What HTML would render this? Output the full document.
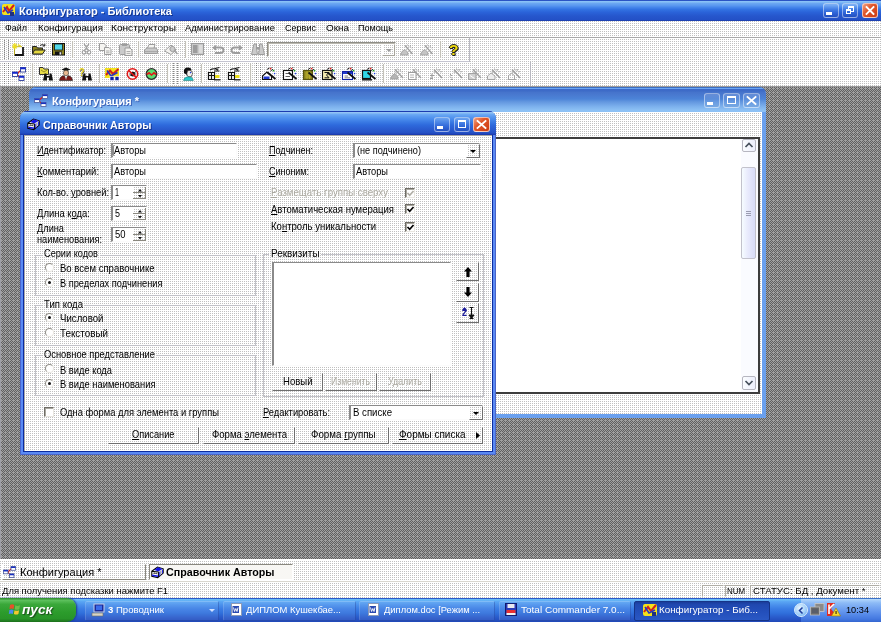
<!DOCTYPE html>
<html><head><meta charset="utf-8"><style>
*{box-sizing:border-box;margin:0;padding:0}
html,body{width:881px;height:622px;overflow:hidden;background:#808080;font-family:"Liberation Sans",sans-serif;font-size:10.7px;color:#000}
.abs{position:absolute}
#root{position:relative;width:881px;height:622px;overflow:hidden;background:#808080}
.t{position:absolute;white-space:nowrap;line-height:13px;transform-origin:0 50%;display:inline-block}
.face{background:conic-gradient(#fff 0 50%,#c0c0c0 50% 75%,#fff 75%) 0 0/2px 2px fixed #efeeef}
.w{color:#fff}
.dis{color:#aaa89f;text-shadow:1px 1px 0 #fff}
.inp{background:#fff;border-top:1px solid #8a8a8a;border-left:2px solid #8a8a8a;border-right:1px solid #fbfbfb;border-bottom:1px solid #fbfbfb}
.grp{border:1px solid #c2c2c8}
.btn{background:conic-gradient(#fff 0 50%,#c0c0c0 50% 75%,#fff 75%) 0 0/2px 2px fixed #efeeef;border-top:1px solid transparent;border-left:1px solid transparent;border-right:1px solid #6e6e6e;border-bottom:1px solid #6e6e6e;background-clip:padding-box,border-box}
.radio{border-radius:50%;background:#fff;border:1px solid #8f8d86;border-right-color:#e8e6e0;border-bottom-color:#e8e6e0}
.dot{border-radius:50%;background:#111}
.chk{background:#fff;border-top:1px solid #6f6d66;border-left:1px solid #6f6d66;border-right:1px solid #e8e6e0;border-bottom:1px solid #e8e6e0;box-shadow:inset 1px 1px 0 #a9a79f}
u{text-decoration:underline;text-underline-offset:1px}
svg{position:absolute;overflow:visible}
</style></head><body><div id="root">
<div class="abs " style="left:0px;top:0px;width:881px;height:21px;background:linear-gradient(#2a54c4 0,#2a54c4 1px,#8cc4f8 1px,#86bef6 2px,#6aa6f2 3.5px,#5a98f0 5.5px,#4484ea 7.5px,#3272e2 9.5px,#2a62d8 12.5px,#2656cc 16px,#2350c6 20px,#1c40b0 20px,#1c40b0 21px)"></div>
<span class="t w" style="left: 19px; top: 5px; font-size: 11.3px; font-weight: bold; text-shadow: rgb(18, 52, 140) 1px 1px 0px; transform: scaleX(0.9748);">Конфигуратор - Библиотека</span>
<div class="abs " style="left:2px;top:4px;width:13px;height:11px;background:#f4e21a;border-radius:2px"></div>
<svg style="left:2px;top:4px" width="13" height="12"><path d="M1 8 L5 3 L7 7 L12 1" stroke="#d02020" stroke-width="2" fill="none"></path><path d="M2 3 L6 9 L11 6" stroke="#2838c0" stroke-width="1.6" fill="none"></path><rect x="8" y="8" width="4" height="4" fill="#203080"></rect></svg>
<div class="abs " style="left:823px;top:3px;width:16px;height:15px;background:linear-gradient(rgba(255,255,255,.16),rgba(255,255,255,.02) 70%,rgba(0,0,40,.06));border:1px solid rgba(255,255,255,.45);border-radius:3px"></div>
<div class="abs " style="left:826px;top:12px;width:6px;height:3px;background:#fff"></div>
<div class="abs " style="left:842px;top:3px;width:16px;height:15px;background:linear-gradient(rgba(255,255,255,.16),rgba(255,255,255,.02) 70%,rgba(0,0,40,.06));border:1px solid rgba(255,255,255,.45);border-radius:3px"></div>
<div class="abs " style="left:848px;top:6px;width:6px;height:6px;border:1px solid #fff;border-top:2px solid #fff"></div>
<div class="abs " style="left:846px;top:9px;width:5px;height:5px;border:1px solid #fff;border-top:2px solid #fff;background:#2f68d8"></div>
<div class="abs " style="left:862px;top:3px;width:16px;height:15px;background:linear-gradient(135deg,#f0a080 0,#e0562a 40%,#cc3c12 100%);border:1px solid rgba(255,255,255,.65);border-radius:3px"></div>
<svg style="left:862px;top:3px" width="16" height="15"><path d="M4.5 4 L11.5 11 M11.5 4 L4.5 11" stroke="#fff" stroke-width="1.8" stroke-linecap="square"></path></svg>
<div class="abs face" style="left:0px;top:21px;width:881px;height:17px;"></div>
<span class="t " style="left: 5px; top: 21px; font-size: 9.6px; transform: scaleX(0.9325);">Файл</span>
<span class="t " style="left: 38px; top: 21px; font-size: 9.6px; transform: scaleX(1.0095);">Конфигурация</span>
<span class="t " style="left: 111px; top: 21px; font-size: 9.6px; transform: scaleX(1.055);">Конструкторы</span>
<span class="t " style="left: 185px; top: 21px; font-size: 9.6px; transform: scaleX(0.9838);">Администрирование</span>
<span class="t " style="left: 285px; top: 21px; font-size: 9.6px; transform: scaleX(0.9434);">Сервис</span>
<span class="t " style="left: 326px; top: 21px; font-size: 9.6px; transform: scaleX(1.0315);">Окна</span>
<span class="t " style="left: 358px; top: 21px; font-size: 9.6px; transform: scaleX(0.9444);">Помощь</span>
<div class="abs " style="left:0px;top:37px;width:881px;height:1px;background:#a8a8a8"></div>
<div class="abs face" style="left:0px;top:38px;width:881px;height:48px;"></div>
<div class="abs " style="left:0px;top:61px;width:470px;height:1px;background:#c4c4d0"></div>
<div class="abs " style="left:469px;top:38px;width:1px;height:24px;background:#b8b8c0"></div>
<div class="abs " style="left:530px;top:62px;width:1px;height:24px;background:#b8b8c0"></div>
<div class="abs" style="left:0;top:86px;width:881px;height:473px;overflow:hidden;background:#848484"><svg style="left:0;top:-2px" width="884" height="476" shape-rendering="crispEdges"><defs><pattern id="mdi" width="4" height="4" patternUnits="userSpaceOnUse"><rect width="4" height="4" fill="#a0a0a0"></rect><path d="M3 0h1v1h-1zM0 1h1v1h-1zM2 1h1v1h-1zM1 2h1v1h-1zM3 2h1v1h-1zM0 3h1v1h-1zM2 3h1v1h-1z" fill="#606060"></path></pattern></defs><rect width="884" height="476" fill="url(#mdi)"></rect></svg></div>
<div class="abs " style="left:0px;top:86px;width:881px;height:1px;background:#9a9a9a"></div>
<div class="abs " style="left:0px;top:87px;width:1px;height:472px;background:#a0a0a8"></div>
<div class="abs " style="left:4px;top:40px;width:1px;height:19px;background:repeating-linear-gradient(#858585 0 1px,transparent 1px 2px)"></div>
<div class="abs " style="left:8px;top:40px;width:1px;height:19px;background:repeating-linear-gradient(#858585 0 1px,transparent 1px 2px)"></div>
<svg style="left:12px;top:43px" width="13" height="13"><rect x="2.5" y="3.5" width="9" height="9" fill="#fff"></rect><path d="M11 4 V12 H2.5" stroke="#111" stroke-width="1.8" fill="none"></path><path d="M2.5 12 V5 M4 3.7 H10" stroke="#b8a820" stroke-width="1"></path><path d="M0 3.2 L5.6 3.2 M2.8 0 L2.8 6.6 M0.8 1 L4.8 5.4 M4.8 1 L0.8 5.4 M6 1.5 L9 3.5" stroke="#ecdc1c" stroke-width="1.1"></path></svg>
<svg style="left:32px;top:43px" width="14" height="12"><path d="M0.5 3.5 H4.5 L5.5 5 H10.5 V11 H0.5Z" fill="#8c8420" stroke="#222" stroke-width="1"></path><path d="M2.5 7 H13.2 L10.5 11 H0.5Z" fill="#e4d840" stroke="#222" stroke-width="1"></path><path d="M8 2.5 Q10.5 0.5 12.5 2.5 M12.8 0.8 V3 H10.6" stroke="#222" stroke-width="1" fill="none"></path></svg>
<svg style="left:52px;top:43px" width="13" height="13"><rect x="0.5" y="0.5" width="12" height="11.5" fill="#8c8420" stroke="#111" stroke-width="1"></rect><rect x="2.5" y="1" width="8" height="6" fill="#50d8e8" stroke="#111" stroke-width="0.8"></rect><rect x="3" y="8.5" width="7" height="3.5" fill="#111"></rect><rect x="7.5" y="9.2" width="1.8" height="2.4" fill="#e8e8e8"></rect></svg>
<div class="abs " style="left:72px;top:41px;width:1px;height:17px;background:#c4c2b9"></div>
<div class="abs " style="left:73px;top:41px;width:1px;height:17px;background:#fbfbf9"></div>
<svg style="left:82px;top:43px" width="9" height="12"><path d="M2 0.5 L6 7 M7 0.5 L3 7" stroke="#9c9c9c" stroke-width="1.2" fill="none"></path><circle cx="2" cy="9.3" r="1.8" fill="none" stroke="#9c9c9c" stroke-width="1.1"></circle><circle cx="7" cy="9.3" r="1.8" fill="none" stroke="#9c9c9c" stroke-width="1.1"></circle></svg>
<svg style="left:99px;top:43px" width="13" height="12"><path d="M0.5 0.5 H5 L7 2.5 V7.5 H0.5Z" fill="#f6f5f2" stroke="#9c9c9c" stroke-width="1"></path><path d="M5.5 4.5 H10 L12 6.5 V11.5 H5.5Z" fill="#f6f5f2" stroke="#9c9c9c" stroke-width="1"></path><path d="M7 8 H10.5 M7 9.8 H10.5" stroke="#9c9c9c" stroke-width="0.8"></path></svg>
<svg style="left:119px;top:43px" width="14" height="13"><rect x="0.5" y="1.5" width="10" height="10" rx="1" fill="#cacaca" stroke="#9c9c9c" stroke-width="1"></rect><rect x="3" y="0.3" width="5" height="2.6" fill="#9c9c9c"></rect><path d="M6 5 H11 L13 7 V12.5 H6Z" fill="#f4f3f0" stroke="#9c9c9c" stroke-width="1"></path><path d="M7.5 8.5 H11.5 M7.5 10.4 H11.5" stroke="#9c9c9c" stroke-width="0.8"></path></svg>
<div class="abs " style="left:138px;top:41px;width:1px;height:17px;background:#c4c2b9"></div>
<div class="abs " style="left:139px;top:41px;width:1px;height:17px;background:#fbfbf9"></div>
<svg style="left:144px;top:44px" width="14" height="11"><path d="M3.5 4 L5 0.5 H11 L10 4" fill="#f6f5f2" stroke="#9c9c9c" stroke-width="1"></path><path d="M0.5 6 L3 4 H12 L13.5 6 V9.5 H0.5Z" fill="#cacaca" stroke="#9c9c9c" stroke-width="1"></path><path d="M1 7.6 H13" stroke="#9c9c9c" stroke-width="0.8"></path></svg>
<svg style="left:164px;top:44px" width="14" height="11"><path d="M0.5 7 L7 1 L12 6 L7 10.5Z" fill="#f4f3f0" stroke="#9c9c9c" stroke-width="1"></path><circle cx="8.5" cy="5" r="2.6" fill="#cacaca" stroke="#9c9c9c" stroke-width="1"></circle><path d="M10.5 7 L13.5 10" stroke="#9c9c9c" stroke-width="1.4"></path></svg>
<div class="abs " style="left:185px;top:41px;width:1px;height:17px;background:#c4c2b9"></div>
<div class="abs " style="left:186px;top:41px;width:1px;height:17px;background:#fbfbf9"></div>
<svg style="left:191px;top:43px" width="13" height="12"><rect x="0.5" y="0.5" width="12" height="11" fill="#cacaca" stroke="#9c9c9c" stroke-width="1"></rect><rect x="2" y="2" width="4.5" height="8" fill="#9c9c9c"></rect><path d="M8 3 H11.5 M8 5 H11.5 M8 7 H11.5 M8 9 H11.5" stroke="#f4f4f2" stroke-width="0.9"></path></svg>
<svg style="left:212px;top:45px" width="12" height="9"><path d="M3.5 2.5 H8.5 Q11.5 2.5 11.5 5 Q11.5 8 8 8 H3" stroke="#9c9c9c" stroke-width="1.8" fill="none"></path><path d="M0 2.8 L4 0 V5.6Z" fill="#9c9c9c"></path></svg>
<svg style="left:231px;top:45px" width="12" height="9"><path d="M8.5 2.5 H3.5 Q0.5 2.5 0.5 5 Q0.5 8 4 8 H9" stroke="#9c9c9c" stroke-width="1.8" fill="none"></path><path d="M12 2.8 L8 0 V5.6Z" fill="#9c9c9c"></path></svg>
<svg style="left:251px;top:43px" width="14" height="13"><path d="M3 1 H5.5 V5 L6.5 11.5 H0.5 L2 5Z M8.5 1 H11 L12 5 L13.5 11.5 H7.5 L8.5 5Z" fill="#cacaca" stroke="#9c9c9c" stroke-width="1"></path><rect x="5.5" y="4" width="3" height="2.5" fill="#9c9c9c"></rect></svg>
<div class="abs face" style="left:267px;top:42px;width:129px;height:15px;border-top:1px solid #8f8d86;border-left:1px solid #8f8d86;border-right:1px solid #fdfdfc;border-bottom:1px solid #fdfdfc;box-shadow:inset 1px 1px 0 #b9b7ae"></div>
<div class="abs face" style="left:382px;top:44px;width:13px;height:12px;border:1px solid #fff;border-right-color:#a7a59c;border-bottom-color:#a7a59c"></div>
<svg style="left:385.5px;top:49px" width="6" height="3"><path d="M0 0 L3 3 L6 0Z" fill="#9c9c9c"></path></svg>
<svg style="left:400px;top:44px" width="13" height="12"><path d="M0.5 11 L2 7.5 L5 5.5 L7.5 8 L8 11Z" fill="#c4c4c4" stroke="#9c9c9c" stroke-width="0.8"></path><path d="M5 1.5 L12.5 10" stroke="#9c9c9c" stroke-width="1.3" fill="none"></path><path d="M7.5 0.5 L8.5 2.5 M10.5 1 L10 3.5 M11.5 4 L13 3.5" stroke="#9c9c9c" stroke-width="0.8" fill="none"></path></svg>
<svg style="left:420px;top:44px" width="13" height="12"><path d="M0.5 11 L2 7.5 L5 5.5 L7.5 8 L8 11Z" fill="#c4c4c4" stroke="#9c9c9c" stroke-width="0.8"></path><path d="M5 1.5 L12.5 10" stroke="#9c9c9c" stroke-width="1.3" fill="none"></path><path d="M7.5 0.5 L8.5 2.5 M10.5 1 L10 3.5 M11.5 4 L13 3.5" stroke="#9c9c9c" stroke-width="0.8" fill="none"></path></svg>
<div class="abs " style="left:440px;top:41px;width:1px;height:17px;background:#c4c2b9"></div>
<div class="abs " style="left:441px;top:41px;width:1px;height:17px;background:#fbfbf9"></div>
<span class="t " style="left: 449.3px; top: 44px; font-size: 14.5px; font-weight: bold; color: rgb(240, 220, 16); text-shadow: rgb(34, 34, 34) 1px 0px 0px, rgb(34, 34, 34) -1px 0px 0px, rgb(34, 34, 34) 0px 1px 0px, rgb(34, 34, 34) 0px -1px 0px, rgb(34, 34, 34) 1px 1px 0px; transform: scaleX(1.0723);">?</span>
<div class="abs " style="left:4px;top:63px;width:1px;height:21px;background:repeating-linear-gradient(#858585 0 1px,transparent 1px 2px)"></div>
<div class="abs " style="left:8px;top:63px;width:1px;height:21px;background:repeating-linear-gradient(#858585 0 1px,transparent 1px 2px)"></div>
<svg style="left:12px;top:67px" width="14" height="14"><path d="M5 7 L9.5 2.5 M5 7 L8 11" stroke="#d01818" stroke-width="1.2" fill="none"></path><rect x="8.5" y="0.5" width="5" height="4.5" fill="#fff" stroke="#2a3a9a" stroke-width="0.9"></rect><rect x="8.5" y="0.5" width="5" height="1.8" fill="#1428d0"></rect><rect x="0.5" y="5" width="5" height="4.5" fill="#fff" stroke="#2a3a9a" stroke-width="0.9"></rect><rect x="0.5" y="5" width="5" height="1.8" fill="#1428d0"></rect><rect x="7" y="9" width="5" height="4.5" fill="#fff" stroke="#2a3a9a" stroke-width="0.9"></rect><rect x="7" y="9" width="5" height="1.8" fill="#1428d0"></rect></svg>
<div class="abs " style="left:32px;top:64px;width:1px;height:19px;background:#c4c2b9"></div>
<div class="abs " style="left:33px;top:64px;width:1px;height:19px;background:#fbfbf9"></div>
<svg style="left:39px;top:67px" width="10" height="8"><path d="M0.5 0.5 H4 L5 2 H9.5 V7.5 H0.5Z" fill="#e8dc48" stroke="#333" stroke-width="1"></path><path d="M2 3 L5 5 L8 3" stroke="#8c8420" stroke-width="0.9" fill="none"></path></svg>
<svg style="left:43px;top:72.5px" width="10" height="8"><path d="M1.5 0.5 H3.5 V3 H6.5 V0.5 H8.5 L10 7.5 H6 V4.5 H4 V7.5 H0Z" fill="#111"></path></svg>
<svg style="left:59px;top:67px" width="13" height="14"><path d="M2.5 2.5 L7 0.5 L11.5 2.5 L7 4.5Z" fill="#111"></path><ellipse cx="7" cy="6" rx="2.6" ry="2.8" fill="#e8b890" stroke="#333" stroke-width="0.6"></ellipse><path d="M0.5 13.5 Q1 9 5 8.8 L7 11 L9 8.8 Q13 9 13.5 13.5Z" fill="#7a1818" stroke="#222" stroke-width="0.6"></path><path d="M6.2 9.5 L7 13 L7.8 9.5Z" fill="#fff"></path></svg>
<span class="t " style="left: 79px; top: 66px; font-size: 10.5px; font-weight: bold; color: rgb(232, 212, 24); text-shadow: rgb(85, 85, 85) 0.6px 0.6px 0px; transform: scaleX(0.8564);">?</span>
<svg style="left:82px;top:72.5px" width="10" height="8"><path d="M1.5 0.5 H3.5 V3 H6.5 V0.5 H8.5 L10 7.5 H6 V4.5 H4 V7.5 H0Z" fill="#111"></path></svg>
<div class="abs " style="left:99px;top:64px;width:1px;height:19px;background:#c4c2b9"></div>
<div class="abs " style="left:100px;top:64px;width:1px;height:19px;background:#fbfbf9"></div>
<div class="abs " style="left:105px;top:68px;width:14px;height:10px;background:#f4e21a"></div>
<svg style="left:105px;top:67px" width="14" height="14"><path d="M1 8 L5 3.5 L8 7 L13.5 2" stroke="#d02020" stroke-width="2" fill="none"></path><path d="M2 3.5 L6 9 L12.5 5.5" stroke="#2838c0" stroke-width="1.7" fill="none"></path><rect x="5" y="9.5" width="4" height="4" fill="#1020a0" stroke="#fff" stroke-width="0.6"></rect><rect x="10" y="9.5" width="4" height="4" fill="#1020a0" stroke="#fff" stroke-width="0.6"></rect></svg>
<svg style="left:126px;top:68px" width="13" height="12"><circle cx="6.5" cy="6" r="5.2" fill="#fff" stroke="#e01818" stroke-width="1.5"></circle><ellipse cx="6.8" cy="6" rx="2.2" ry="2.6" fill="#111"></ellipse><path d="M3.5 3.5 L10 8.5 M3.5 8 L10 3.5 M3.2 6 H10.2" stroke="#111" stroke-width="0.8"></path><path d="M2.8 2.6 L10.4 9.6" stroke="#e01818" stroke-width="1.6"></path></svg>
<svg style="left:145px;top:68px" width="13" height="12"><circle cx="6.5" cy="6" r="5.3" fill="#58e070" stroke="#2a2a2a" stroke-width="1.3"></circle><path d="M1.8 6.5 L4 4.8 L6.5 7 L9 4.8 L11.2 6.5" stroke="#e01818" stroke-width="1.6" fill="none"></path></svg>
<div class="abs " style="left:167px;top:64px;width:1px;height:19px;background:#c4c2b9"></div>
<div class="abs " style="left:168px;top:64px;width:1px;height:19px;background:#fbfbf9"></div>
<div class="abs " style="left:173px;top:63px;width:1px;height:21px;background:repeating-linear-gradient(#858585 0 1px,transparent 1px 2px)"></div>
<div class="abs " style="left:177px;top:63px;width:1px;height:21px;background:repeating-linear-gradient(#858585 0 1px,transparent 1px 2px)"></div>
<svg style="left:182px;top:67px" width="12" height="14"><path d="M2 6 Q1 0.5 6 0.5 Q9.5 0.5 9.5 3.5 L7 4.5 L5 8Z" fill="#111"></path><path d="M5.5 3.8 Q8.5 2.6 9.8 4.5 L10.8 7 L9.8 7.8 L9.5 9.6 H6 L4.8 7Z" fill="#f4f0ec" stroke="#222" stroke-width="0.6"></path><circle cx="8.6" cy="5.6" r="0.8" fill="#2040d0"></circle><path d="M1.5 13.5 Q2 10.5 5.5 9.8 L9 10.2 Q11 11 11.3 13.5Z" fill="#28c8c8" stroke="#0a6a6a" stroke-width="0.5"></path></svg>
<div class="abs " style="left:201px;top:64px;width:1px;height:19px;background:#c4c2b9"></div>
<div class="abs " style="left:202px;top:64px;width:1px;height:19px;background:#fbfbf9"></div>
<svg style="left:207px;top:67px" width="14" height="14"><path d="M1.5 5.5 H7.5 V12.5 H1.5Z M1.5 8.5 H7.5 M4.5 5.5 V12.5" fill="#fff" stroke="#111" stroke-width="1.2"></path><path d="M3 3 Q7 0.5 11 3 M8 1.5 L12.5 0.5 M7 4 H12.5" stroke="#111" stroke-width="1.1" fill="none"></path><rect x="8" y="8" width="4.5" height="3" fill="#e8dc20"></rect><path d="M7 12.8 H13.5" stroke="#111" stroke-width="1.2"></path></svg>
<svg style="left:227px;top:67px" width="14" height="14"><path d="M1.5 5.5 H7.5 V12.5 H1.5Z M1.5 8.5 H7.5 M4.5 5.5 V12.5" fill="#fff" stroke="#111" stroke-width="1.2"></path><path d="M3 3 Q7 0.5 11 3 M8 1.5 L12.5 0.5 M7 4 H12.5" stroke="#111" stroke-width="1.1" fill="none"></path><rect x="8" y="8" width="4.5" height="3" fill="#e8dc20"></rect><path d="M7 12.8 H13.5" stroke="#111" stroke-width="1.2"></path></svg>
<div class="abs " style="left:250px;top:64px;width:1px;height:19px;background:#c4c2b9"></div>
<div class="abs " style="left:251px;top:64px;width:1px;height:19px;background:#fbfbf9"></div>
<div class="abs " style="left:256px;top:63px;width:1px;height:21px;background:repeating-linear-gradient(#858585 0 1px,transparent 1px 2px)"></div>
<div class="abs " style="left:260px;top:63px;width:1px;height:21px;background:repeating-linear-gradient(#858585 0 1px,transparent 1px 2px)"></div>
<svg style="left:262px;top:67px" width="15" height="14"><path d="M0.5 9 L5 5 L9.5 9 V12.5 H0.5Z" fill="#fff" stroke="#111" stroke-width="1.1"></path><rect x="1.5" y="9.5" width="6" height="2.5" fill="#2038d0"></rect><path d="M5.5 5.5 L13.5 12" stroke="#111" stroke-width="1.8"></path><path d="M5 2.5 L7.5 0.8 M8.5 4 L11 2.2 M9.5 1 L10.2 0.2" stroke="#111" stroke-width="0.9"></path><circle cx="8.6" cy="1.6" r="0.9" fill="#e02020"></circle><circle cx="11.6" cy="3.6" r="0.9" fill="#20a020"></circle><circle cx="12.6" cy="6.6" r="0.8" fill="#2040e0"></circle></svg>
<svg style="left:283px;top:67px" width="15" height="14"><rect x="0.5" y="3.5" width="9" height="9" fill="#fff" stroke="#111" stroke-width="1.1"></rect><path d="M2.5 6.5 H5.5 M2.5 9.5 H7" stroke="#333" stroke-width="0.8"></path><path d="M5.5 5.5 L13.5 12" stroke="#111" stroke-width="1.8"></path><path d="M5 2.5 L7.5 0.8 M8.5 4 L11 2.2 M9.5 1 L10.2 0.2" stroke="#111" stroke-width="0.9"></path><circle cx="8.6" cy="1.6" r="0.9" fill="#e02020"></circle><circle cx="11.6" cy="3.6" r="0.9" fill="#20a020"></circle><circle cx="12.6" cy="6.6" r="0.8" fill="#2040e0"></circle></svg>
<svg style="left:303px;top:67px" width="15" height="14"><rect x="0.5" y="3.5" width="9" height="9" fill="#8c8420" stroke="#5a5410" stroke-width="1.1"></rect><path d="M2 6 H8 M2 8 H8 M2 10 H8 M4 4 V12 M6.5 4 V12" stroke="#c4b830" stroke-width="0.7"></path><path d="M5.5 5.5 L13.5 12" stroke="#111" stroke-width="1.8"></path><path d="M5 2.5 L7.5 0.8 M8.5 4 L11 2.2 M9.5 1 L10.2 0.2" stroke="#111" stroke-width="0.9"></path><circle cx="8.6" cy="1.6" r="0.9" fill="#e02020"></circle><circle cx="11.6" cy="3.6" r="0.9" fill="#20a020"></circle><circle cx="12.6" cy="6.6" r="0.8" fill="#2040e0"></circle></svg>
<svg style="left:322px;top:67px" width="15" height="14"><rect x="0.5" y="3.5" width="9.5" height="9" fill="#f4ecb0" stroke="#111" stroke-width="1.1"></rect><path d="M2.5 5.5 H7 L4.5 8 L7 10.8 H2.5" stroke="#111" stroke-width="1" fill="none"></path><path d="M5.5 5.5 L13.5 12" stroke="#111" stroke-width="1.8"></path><path d="M5 2.5 L7.5 0.8 M8.5 4 L11 2.2 M9.5 1 L10.2 0.2" stroke="#111" stroke-width="0.9"></path><circle cx="8.6" cy="1.6" r="0.9" fill="#e02020"></circle><circle cx="11.6" cy="3.6" r="0.9" fill="#20a020"></circle><circle cx="12.6" cy="6.6" r="0.8" fill="#2040e0"></circle></svg>
<svg style="left:342px;top:67px" width="15" height="14"><rect x="0.5" y="4.5" width="10" height="8" fill="#fff" stroke="#1020a0" stroke-width="1.1"></rect><rect x="1" y="5" width="9" height="2" fill="#2038d0"></rect><path d="M2.5 9 H6 M2.5 10.8 H8" stroke="#666" stroke-width="0.8"></path><path d="M5.5 5.5 L13.5 12" stroke="#111" stroke-width="1.8"></path><path d="M5 2.5 L7.5 0.8 M8.5 4 L11 2.2 M9.5 1 L10.2 0.2" stroke="#111" stroke-width="0.9"></path><circle cx="8.6" cy="1.6" r="0.9" fill="#e02020"></circle><circle cx="11.6" cy="3.6" r="0.9" fill="#20a020"></circle><circle cx="12.6" cy="6.6" r="0.8" fill="#2040e0"></circle></svg>
<svg style="left:362px;top:67px" width="15" height="14"><rect x="0.5" y="3.5" width="8" height="8" fill="#30d8e8" stroke="#111" stroke-width="1.2"></rect><path d="M0 12.8 H10" stroke="#111" stroke-width="1.4"></path><path d="M5.5 5.5 L13.5 12" stroke="#111" stroke-width="1.8"></path><path d="M5 2.5 L7.5 0.8 M8.5 4 L11 2.2 M9.5 1 L10.2 0.2" stroke="#111" stroke-width="0.9"></path><circle cx="8.6" cy="1.6" r="0.9" fill="#e02020"></circle><circle cx="11.6" cy="3.6" r="0.9" fill="#20a020"></circle><circle cx="12.6" cy="6.6" r="0.8" fill="#2040e0"></circle></svg>
<div class="abs " style="left:383px;top:64px;width:1px;height:19px;background:#c4c2b9"></div>
<div class="abs " style="left:384px;top:64px;width:1px;height:19px;background:#fbfbf9"></div>
<svg style="left:390px;top:68px" width="14" height="12"><path d="M0.5 11 L2 7.5 L5 5.5 L7.5 8 L8 11Z" fill="#b4b4b4" stroke="#9c9c9c" stroke-width="0.8"></path><path d="M5 1.5 L13 10" stroke="#9c9c9c" stroke-width="1.3" fill="none"></path><path d="M7.5 0.5 L8.5 2.5 M10.5 1 L10 3.5 M11.5 4 L13 3.5 M4.5 4 L6.5 4.5" stroke="#9c9c9c" stroke-width="0.8" fill="none"></path></svg>
<svg style="left:408px;top:68px" width="14" height="12"><rect x="0.5" y="4.5" width="7.5" height="7" fill="#fff" stroke="#9c9c9c" stroke-width="1"></rect><path d="M2 7 H6 M2 9.3 H6" stroke="#9c9c9c" stroke-width="0.8"></path><path d="M5 1.5 L13 10" stroke="#9c9c9c" stroke-width="1.3" fill="none"></path><path d="M7.5 0.5 L8.5 2.5 M10.5 1 L10 3.5 M11.5 4 L13 3.5 M4.5 4 L6.5 4.5" stroke="#9c9c9c" stroke-width="0.8" fill="none"></path></svg>
<svg style="left:429px;top:68px" width="14" height="12"><path d="M1 7.5 H5 M3 5.5 V10.5 M1 10.5 H4" stroke="#9c9c9c" stroke-width="1.1" fill="none"></path><path d="M5 1.5 L13 10" stroke="#9c9c9c" stroke-width="1.3" fill="none"></path><path d="M7.5 0.5 L8.5 2.5 M10.5 1 L10 3.5 M11.5 4 L13 3.5 M4.5 4 L6.5 4.5" stroke="#9c9c9c" stroke-width="0.8" fill="none"></path></svg>
<svg style="left:449px;top:68px" width="14" height="12"><path d="M1 6 L3 8 M1 8.5 L3 10.5 M2 11.5 H4" stroke="#9c9c9c" stroke-width="1" fill="none"></path><path d="M5 1.5 L13 10" stroke="#9c9c9c" stroke-width="1.3" fill="none"></path><path d="M7.5 0.5 L8.5 2.5 M10.5 1 L10 3.5 M11.5 4 L13 3.5 M4.5 4 L6.5 4.5" stroke="#9c9c9c" stroke-width="0.8" fill="none"></path></svg>
<svg style="left:468px;top:68px" width="14" height="12"><path d="M0.5 5.5 H8 V11.5 H0.5Z" fill="#d0d0d0" stroke="#9c9c9c" stroke-width="0.9"></path><path d="M2 7.5 L6.5 10.5" stroke="#fff" stroke-width="1"></path><path d="M5 1.5 L13 10" stroke="#9c9c9c" stroke-width="1.3" fill="none"></path><path d="M7.5 0.5 L8.5 2.5 M10.5 1 L10 3.5 M11.5 4 L13 3.5 M4.5 4 L6.5 4.5" stroke="#9c9c9c" stroke-width="0.8" fill="none"></path></svg>
<svg style="left:487px;top:68px" width="14" height="12"><path d="M0.5 8 L4 5 L8 8 V11.5 H0.5Z" fill="#ececec" stroke="#9c9c9c" stroke-width="0.9"></path><path d="M5 1.5 L13 10" stroke="#9c9c9c" stroke-width="1.3" fill="none"></path><path d="M7.5 0.5 L8.5 2.5 M10.5 1 L10 3.5 M11.5 4 L13 3.5 M4.5 4 L6.5 4.5" stroke="#9c9c9c" stroke-width="0.8" fill="none"></path></svg>
<svg style="left:507px;top:68px" width="14" height="12"><path d="M0.5 11.5 H9 M1.5 11 V7.5 L4.5 5.5 L7.5 7.5 V11" fill="none" stroke="#9c9c9c" stroke-width="0.9"></path><path d="M5 1.5 L13 10" stroke="#9c9c9c" stroke-width="1.3" fill="none"></path><path d="M7.5 0.5 L8.5 2.5 M10.5 1 L10 3.5 M11.5 4 L13 3.5 M4.5 4 L6.5 4.5" stroke="#9c9c9c" stroke-width="0.8" fill="none"></path></svg>
<div class="abs " style="left:29px;top:87px;width:737px;height:331px;background:#6aa0ee;border-radius:7px 7px 0 0"></div>
<div class="abs " style="left:29px;top:87px;width:737px;height:25px;border-radius:7px 7px 0 0;background:linear-gradient(#3a6ec4 0,#3a6ec4 1px,#6aa4f4 1px,#6aa4f4 2px,#3c68c8 2px,#3e6cc8 4px,#4674cc 5.5px,#4a7cd2 9px,#4c84d8 12px,#6498e0 15px,#7aaeec 19px,#8cc0f4 23px,#8cc0f4 25px)"></div>
<div class="abs face" style="left:33px;top:112px;width:729px;height:302px;"></div>
<svg style="left:34px;top:94px" width="14" height="13"><path d="M5 6.5 L9 2.5 M5 6.5 L8 10.5" stroke="#d02020" stroke-width="1.2"></path><rect x="8.5" y="0.5" width="5" height="4" fill="#fff" stroke="#4a5a9a" stroke-width="0.8"></rect><rect x="8.5" y="0.5" width="5" height="1.6" fill="#1830c0"></rect><rect x="0.5" y="4.5" width="5" height="4" fill="#fff" stroke="#4a5a9a" stroke-width="0.8"></rect><rect x="0.5" y="4.5" width="5" height="1.6" fill="#1830c0"></rect><rect x="7" y="8.5" width="5" height="4" fill="#fff" stroke="#4a5a9a" stroke-width="0.8"></rect><rect x="7" y="8.5" width="5" height="1.6" fill="#1830c0"></rect></svg>
<span class="t w" style="left: 51.5px; top: 95px; font-size: 11.3px; font-weight: bold; text-shadow: rgb(58, 98, 184) 1px 1px 0px; transform: scaleX(0.9721);">Конфигурация *</span>
<div class="abs " style="left:704px;top:93px;width:16px;height:15px;background:linear-gradient(rgba(255,255,255,.16),rgba(255,255,255,.02) 70%,rgba(0,0,40,.06));border:1px solid rgba(255,255,255,.45);border-radius:3px"></div>
<div class="abs " style="left:707px;top:102px;width:6px;height:3px;background:#fff"></div>
<div class="abs " style="left:723px;top:93px;width:17px;height:15px;background:linear-gradient(rgba(255,255,255,.16),rgba(255,255,255,.02) 70%,rgba(0,0,40,.06));border:1px solid rgba(255,255,255,.45);border-radius:3px"></div>
<div class="abs " style="left:727px;top:96px;width:9px;height:8px;border:1px solid #fff;border-top:2px solid #fff"></div>
<div class="abs " style="left:743px;top:93px;width:17px;height:15px;background:linear-gradient(rgba(255,255,255,.16),rgba(255,255,255,.02) 70%,rgba(0,0,40,.06));border:1px solid rgba(255,255,255,.45);border-radius:3px"></div>
<svg style="left:743px;top:93px" width="17" height="15"><path d="M4.5 4 L12.5 11 M12.5 4 L4.5 11" stroke="#fff" stroke-width="1.8" stroke-linecap="square"></path></svg>
<div class="abs " style="left:33px;top:137px;width:727px;height:257px;background:#fff;border:2px solid #3c3c3c;border-top-color:#3c3c3c"></div>
<div class="abs " style="left:741px;top:139px;width:17px;height:253px;background:#fafbff"></div>
<div class="abs " style="left:742px;top:139px;width:14px;height:13px;background:linear-gradient(90deg,#fbfdff,#eceefc);border:1px solid #b6b6c0;border-radius:2px"></div>
<svg style="left:742px;top:139px" width="14" height="13"><path d="M3.5 8 L7 4.5 L10.5 8" stroke="#46505c" stroke-width="1.7" fill="none"></path></svg>
<div class="abs " style="left:742px;top:376px;width:14px;height:14px;background:linear-gradient(90deg,#fbfdff,#eceefc);border:1px solid #b6b6c0;border-radius:2px"></div>
<svg style="left:742px;top:376px" width="14" height="14"><path d="M3.5 5 L7 8.5 L10.5 5" stroke="#46505c" stroke-width="1.7" fill="none"></path></svg>
<div class="abs " style="left:741px;top:167px;width:15px;height:92px;background:linear-gradient(90deg,#f6fcff,#e8eafc 45%,#d8dcf8);border:1px solid #c2c2cc;border-radius:2px"></div>
<div class="abs " style="left:746px;top:211px;width:5px;height:1px;background:#9a9cb0"></div>
<div class="abs " style="left:746px;top:213px;width:5px;height:1px;background:#9a9cb0"></div>
<div class="abs " style="left:746px;top:215px;width:5px;height:1px;background:#9a9cb0"></div>
<div class="abs " style="left:20px;top:111px;width:476px;height:344px;background:#5a8af4;border:1px solid #4a64c8;border-radius:7px 7px 0 0"></div>
<div class="abs " style="left:23px;top:134px;width:470px;height:318px;background:#0a2ca0"></div>
<div class="abs " style="left:20px;top:111px;width:476px;height:24px;border-radius:7px 7px 0 0;background:linear-gradient(#1c3cb0 0,#1c3cb0 1px,#9ac8f4 1px,#8abef4 2px,#6aa8f4 3.5px,#5a9af0 5.5px,#4a8cec 8px,#3a7ae4 11px,#2e6adc 14px,#2a5cd0 18px,#2450c4 22px,#1c3cb0 23.5px,#1c3cb0 24px)"></div>
<div class="abs " style="left:24px;top:135px;width:468px;height:1px;background:#a8a8a8"></div>
<div class="abs face" style="left:24px;top:136px;width:468px;height:315px;"></div>
<div class="abs " style="left:24px;top:136px;width:1px;height:315px;background:#a8a8a8"></div>
<div class="abs " style="left:25px;top:136px;width:1px;height:315px;background:#fff"></div>
<svg style="left:27px;top:118px" width="13" height="12"><path d="M0.8 5.2 L6.5 1 L12.2 2.8 L12.2 7 L6.8 11.6 L0.8 10.2Z" fill="#fff" stroke="#000" stroke-width="1.1"></path><path d="M3.2 4 L7 1.3 L11.6 2.9 L7.6 5.6Z" fill="#1414e6"></path><path d="M7.6 6.2 L12 3.4 L12 6.8 L7.6 10.8Z" fill="#1414e6"></path><path d="M9.2 4.6 L9.2 9.2 M10.6 3.9 L10.6 8" stroke="#f4f0c0" stroke-width="0.9"></path><path d="M1 5.4 L7.4 5.9 L7.4 11" stroke="#000" stroke-width="1" fill="none"></path><path d="M1.2 8.6 L7 9.6 L7 11 L1.2 9.9Z" fill="#1414e6"></path><path d="M2.8 7.8 V6.9 H3.8 V7.9 M4.8 8 V7.1 H5.8 V8.2" stroke="#000" stroke-width="0.7" fill="none"></path></svg>
<span class="t w" style="left: 43px; top: 119px; font-size: 11.3px; font-weight: bold; text-shadow: rgb(18, 52, 140) 1px 1px 0px; transform: scaleX(0.9476);">Справочник Авторы</span>
<div class="abs " style="left:434px;top:117px;width:16px;height:15px;background:linear-gradient(rgba(255,255,255,.16),rgba(255,255,255,.02) 70%,rgba(0,0,40,.06));border:1px solid rgba(255,255,255,.45);border-radius:3px"></div>
<div class="abs " style="left:437px;top:126px;width:6px;height:3px;background:#fff"></div>
<div class="abs " style="left:454px;top:117px;width:16px;height:15px;background:linear-gradient(rgba(255,255,255,.16),rgba(255,255,255,.02) 70%,rgba(0,0,40,.06));border:1px solid rgba(255,255,255,.45);border-radius:3px"></div>
<div class="abs " style="left:458px;top:120px;width:8px;height:8px;border:1px solid #fff;border-top:2px solid #fff"></div>
<div class="abs " style="left:473px;top:117px;width:17px;height:15px;background:linear-gradient(135deg,#f0a080 0,#e0562a 40%,#cc3c12 100%);border:1px solid rgba(255,255,255,.65);border-radius:3px"></div>
<svg style="left:473px;top:117px" width="17" height="15"><path d="M4.5 4 L12.5 11 M12.5 4 L4.5 11" stroke="#fff" stroke-width="1.8" stroke-linecap="square"></path></svg>
<span class="t " style="left: 36.5px; top: 144px; font-size: 10.7px; transform: scaleX(0.845);"><u>И</u>дентификатор:</span>
<div class="abs inp" style="left:111px;top:143px;width:126px;height:15px;"></div>
<span class="t " style="left: 113.7px; top: 144px; font-size: 10.7px; transform: scaleX(0.8667);">Авторы</span>
<div class="abs " style="left:113px;top:145px;width:1px;height:11px;background:#8c8c8c"></div>
<div class="abs " style="left:112px;top:145px;width:3px;height:1px;background:#a8a8a8"></div>
<div class="abs " style="left:112px;top:155px;width:3px;height:1px;background:#a8a8a8"></div>
<span class="t " style="left: 36.5px; top: 165px; font-size: 10.7px; transform: scaleX(0.882);"><u>К</u>омментарий:</span>
<div class="abs inp" style="left:111px;top:164px;width:146px;height:15px;"></div>
<span class="t " style="left: 113.7px; top: 165px; font-size: 10.7px; transform: scaleX(0.8667);">Авторы</span>
<span class="t " style="left: 36.5px; top: 186px; font-size: 10.7px; transform: scaleX(0.8699);">Кол-во. <u>у</u>ровней:</span>
<div class="abs inp" style="left:111px;top:185px;width:36px;height:15px;"></div>
<span class="t " style="left: 114.5px; top: 186px; font-size: 10.7px; transform: scaleX(0.6719);">1</span>
<div class="abs face" style="left:133px;top:187px;width:13px;height:6px;border-bottom:1px solid #8a887f;border-right:1px solid #8a887f"></div>
<div class="abs face" style="left:133px;top:193px;width:13px;height:6px;border-bottom:1px solid #8a887f;border-right:1px solid #8a887f"></div>
<svg style="left:138px;top:188.5px" width="4" height="2.5"><path d="M0 2.5 L2 0 L4 2.5Z" fill="#111"></path></svg>
<svg style="left:138px;top:195.0px" width="4" height="2.5"><path d="M0 0 L2 2.5 L4 0Z" fill="#111"></path></svg>
<span class="t " style="left: 36.5px; top: 207px; font-size: 10.7px; transform: scaleX(0.8843);">Длина к<u>о</u>да:</span>
<div class="abs inp" style="left:111px;top:206px;width:36px;height:15px;"></div>
<span class="t " style="left: 114.5px; top: 207px; font-size: 10.7px; transform: scaleX(0.8399);">5</span>
<div class="abs face" style="left:133px;top:208px;width:13px;height:6px;border-bottom:1px solid #8a887f;border-right:1px solid #8a887f"></div>
<div class="abs face" style="left:133px;top:214px;width:13px;height:6px;border-bottom:1px solid #8a887f;border-right:1px solid #8a887f"></div>
<svg style="left:138px;top:209.5px" width="4" height="2.5"><path d="M0 2.5 L2 0 L4 2.5Z" fill="#111"></path></svg>
<svg style="left:138px;top:216.0px" width="4" height="2.5"><path d="M0 0 L2 2.5 L4 0Z" fill="#111"></path></svg>
<span class="t " style="left: 36.5px; top: 222px; font-size: 10.7px; transform: scaleX(0.8623);"><u>Д</u>лина</span>
<span class="t " style="left: 36.5px; top: 233px; font-size: 10.7px; transform: scaleX(0.8656);">наименования:</span>
<div class="abs inp" style="left:111px;top:227px;width:36px;height:15px;"></div>
<span class="t " style="left: 114.5px; top: 228px; font-size: 10.7px; transform: scaleX(0.883);">50</span>
<div class="abs face" style="left:133px;top:229px;width:13px;height:6px;border-bottom:1px solid #8a887f;border-right:1px solid #8a887f"></div>
<div class="abs face" style="left:133px;top:235px;width:13px;height:6px;border-bottom:1px solid #8a887f;border-right:1px solid #8a887f"></div>
<svg style="left:138px;top:230.5px" width="4" height="2.5"><path d="M0 2.5 L2 0 L4 2.5Z" fill="#111"></path></svg>
<svg style="left:138px;top:237.0px" width="4" height="2.5"><path d="M0 0 L2 2.5 L4 0Z" fill="#111"></path></svg>
<span class="t " style="left: 269px; top: 144px; font-size: 10.7px; transform: scaleX(0.8479);"><u>П</u>одчинен:</span>
<div class="abs inp" style="left:353px;top:143px;width:127px;height:15px;"></div>
<span class="t " style="left: 357px; top: 144px; font-size: 10.7px; transform: scaleX(0.8544);">(не подчинено)</span>
<div class="abs btn" style="left:466px;top:144px;width:14px;height:14px;"></div>
<svg style="left:469.5px;top:150.0px" width="6" height="3"><path d="M0 0 L3 3 L6 0Z" fill="#000"></path></svg>
<span class="t " style="left: 269px; top: 165px; font-size: 10.7px; transform: scaleX(0.838);"><u>С</u>иноним:</span>
<div class="abs inp" style="left:353px;top:164px;width:128px;height:15px;"></div>
<span class="t " style="left: 355.7px; top: 165px; font-size: 10.7px; transform: scaleX(0.8667);">Авторы</span>
<span class="t dis" style="left: 270.5px; top: 186px; font-size: 10.7px; transform: scaleX(0.9042);"><u>Р</u>азмещать группы сверху</span>
<div class="abs chk" style="left:405px;top:188px;width:10px;height:10px;"></div>
<svg style="left:407px;top:190px" width="7" height="7"><path d="M0.5 3 L2.7 5.3 L6.5 1" stroke="#b0aea6" stroke-width="1.7" fill="none"></path></svg>
<span class="t " style="left: 270.5px; top: 203px; font-size: 10.7px; transform: scaleX(0.8921);"><u>А</u>втоматическая нумерация</span>
<div class="abs chk" style="left:405px;top:204px;width:10px;height:10px;"></div>
<svg style="left:407px;top:206.3px" width="7" height="7"><path d="M0.5 3 L2.7 5.3 L6.5 1" stroke="#000" stroke-width="1.7" fill="none"></path></svg>
<span class="t " style="left: 270.5px; top: 220px; font-size: 10.7px; transform: scaleX(0.8948);">Ко<u>н</u>троль уникальности</span>
<div class="abs chk" style="left:405px;top:222px;width:10px;height:10px;"></div>
<svg style="left:407px;top:223.5px" width="7" height="7"><path d="M0.5 3 L2.7 5.3 L6.5 1" stroke="#000" stroke-width="1.7" fill="none"></path></svg>
<div class="abs grp" style="left:35px;top:255px;width:221px;height:41px;"></div>
<div class="abs face" style="left:42px;top:252px;width:58px;height:8px;"></div>
<span class="t " style="left: 44px; top: 247px; font-size: 10.7px; transform: scaleX(0.8586);">Серии кодов</span>
<div class="abs radio" style="left:45px;top:263px;width:9px;height:9px;"></div>
<span class="t " style="left: 60px; top: 262px; font-size: 10.7px; transform: scaleX(0.8943);">Во всем справочнике</span>
<div class="abs radio" style="left:45px;top:278px;width:9px;height:9px;"></div>
<div class="abs dot" style="left:48.0px;top:280.5px;width:3.0px;height:3.0px;"></div>
<span class="t " style="left: 60px; top: 277px; font-size: 10.7px; transform: scaleX(0.864);">В пределах подчинения</span>
<div class="abs grp" style="left:35px;top:305px;width:221px;height:41px;"></div>
<div class="abs face" style="left:42px;top:302px;width:43px;height:8px;"></div>
<span class="t " style="left: 44px; top: 298px; font-size: 10.7px; transform: scaleX(0.8969);">Тип кода</span>
<div class="abs radio" style="left:45px;top:313px;width:9px;height:9px;"></div>
<div class="abs dot" style="left:48.0px;top:316.0px;width:3.0px;height:3.0px;"></div>
<span class="t " style="left: 60px; top: 312px; font-size: 10.7px; transform: scaleX(0.9021);">Числовой</span>
<div class="abs radio" style="left:45px;top:328px;width:9px;height:9px;"></div>
<span class="t " style="left: 60px; top: 327px; font-size: 10.7px; transform: scaleX(0.922);">Текстовый</span>
<div class="abs grp" style="left:35px;top:355px;width:221px;height:41px;"></div>
<div class="abs face" style="left:42px;top:352px;width:115px;height:8px;"></div>
<span class="t " style="left: 44px; top: 348px; font-size: 10.7px; transform: scaleX(0.8733);">Основное представление</span>
<div class="abs radio" style="left:45px;top:364px;width:9px;height:9px;"></div>
<span class="t " style="left: 60px; top: 364px; font-size: 10.7px; transform: scaleX(0.8726);">В виде кода</span>
<div class="abs radio" style="left:45px;top:379px;width:9px;height:9px;"></div>
<div class="abs dot" style="left:48.0px;top:381.8px;width:3.0px;height:3.0px;"></div>
<span class="t " style="left: 60px; top: 378px; font-size: 10.7px; transform: scaleX(0.876);">В виде наименования</span>
<div class="abs chk" style="left:44px;top:407px;width:10px;height:10px;"></div>
<span class="t " style="left: 60px; top: 406px; font-size: 10.7px; transform: scaleX(0.8791);">О<u>д</u>на форма для элемента и группы</span>
<div class="abs grp" style="left:263px;top:254px;width:221px;height:143px;"></div>
<div class="abs face" style="left:269px;top:251px;width:52px;height:8px;"></div>
<span class="t " style="left: 270.5px; top: 247px; font-size: 10.7px; transform: scaleX(0.926);">Реквизиты</span>
<div class="abs inp" style="left:272px;top:262px;width:179px;height:104px;"></div>
<div class="abs btn" style="left:456px;top:262px;width:23px;height:19px;"></div>
<svg style="left:463.5px;top:266.5px" width="8" height="10"><path d="M4 0 L8 4.5 L5.6 4.5 L5.6 10 L2.4 10 L2.4 4.5 L0 4.5Z" fill="#000"></path></svg>
<div class="abs btn" style="left:456px;top:283px;width:23px;height:19px;"></div>
<svg style="left:463.5px;top:286.5px" width="8" height="10"><path d="M4 10 L8 5.5 L5.6 5.5 L5.6 0 L2.4 0 L2.4 5.5 L0 5.5Z" fill="#000"></path></svg>
<div class="abs btn" style="left:456px;top:303px;width:23px;height:20px;"></div>
<span class="t " style="left: 461.5px; top: 306px; font-size: 10px; font-weight: bold; color: rgb(26, 26, 154); transform: scaleX(0.8989);">2</span>
<svg style="left:461.5px;top:307px" width="5" height="4"><path d="M0 4 L2.5 0 L5 4Z" fill="#1a1a9a"></path></svg>
<svg style="left:468.5px;top:307px" width="5" height="12"><path d="M0.5 0.5 H4.5 M2.5 0.5 V9 M0 8 L2.5 11.5 L5 8Z M0.5 11.5 H4.5" stroke="#111" stroke-width="1" fill="#111"></path></svg>
<div class="abs btn" style="left:272px;top:373px;width:51px;height:18px;"></div>
<span class="t " style="left: 282.8px; top: 375px; font-size: 10.7px; transform: scaleX(0.8939);">Новый</span>
<div class="abs btn" style="left:325px;top:373px;width:52px;height:18px;"></div>
<span class="t dis" style="left: 331px; top: 375px; font-size: 10.7px; transform: scaleX(0.8088);">Изменить</span>
<div class="abs btn" style="left:379px;top:373px;width:52px;height:18px;"></div>
<span class="t dis" style="left: 387.5px; top: 375px; font-size: 10.7px; transform: scaleX(0.8331);">Удалить</span>
<span class="t " style="left: 263px; top: 406px; font-size: 10.7px; transform: scaleX(0.8723);"><u>Р</u>едактировать:</span>
<div class="abs inp" style="left:349px;top:405px;width:134px;height:15px;"></div>
<span class="t " style="left: 352.5px; top: 406px; font-size: 10.7px; transform: scaleX(0.9008);">В списке</span>
<div class="abs btn" style="left:469px;top:406px;width:14px;height:14px;"></div>
<svg style="left:472.5px;top:412.0px" width="6" height="3"><path d="M0 0 L3 3 L6 0Z" fill="#000"></path></svg>
<div class="abs btn" style="left:108px;top:427px;width:91px;height:17px;"></div>
<span class="t " style="left: 132px; top: 428px; font-size: 10.7px; transform: scaleX(0.8638);"><u>О</u>писание</span>
<div class="abs btn" style="left:203px;top:427px;width:92px;height:17px;"></div>
<span class="t " style="left: 212px; top: 428px; font-size: 10.7px; transform: scaleX(0.8972);">Форма <u>э</u>лемента</span>
<div class="abs btn" style="left:298px;top:427px;width:91px;height:17px;"></div>
<span class="t " style="left: 310.5px; top: 428px; font-size: 10.7px; transform: scaleX(0.9133);">Форма <u>г</u>руппы</span>
<div class="abs btn" style="left:392px;top:427px;width:91px;height:17px;"></div>
<span class="t " style="left: 399px; top: 428px; font-size: 10.7px; transform: scaleX(0.9323);"><u>Ф</u>ормы списка</span>
<svg style="left:475.5px;top:431.5px" width="4" height="7"><path d="M0 0 L4 3.5 L0 7Z" fill="#000"></path></svg>
<div class="abs face" style="left:0px;top:559px;width:881px;height:39px;"></div>
<div class="abs " style="left:0px;top:559px;width:881px;height:1px;background:#fff"></div>
<div class="abs face" style="left:2px;top:564px;width:144px;height:16px;border-top:1px solid #fff;border-left:1px solid #fff;border-right:1px solid #8a887f;border-bottom:1px solid #8a887f"></div>
<svg style="left:3px;top:566px" width="13" height="12"><path d="M5 6 L8.5 2.5 M5 6 L7.5 9.5" stroke="#d02020" stroke-width="1.1"></path><rect x="8" y="0.5" width="4.5" height="3.8" fill="#fff" stroke="#4a5a9a" stroke-width="0.8"></rect><rect x="8" y="0.5" width="4.5" height="1.5" fill="#1830c0"></rect><rect x="0.5" y="4" width="4.5" height="3.8" fill="#fff" stroke="#4a5a9a" stroke-width="0.8"></rect><rect x="0.5" y="4" width="4.5" height="1.5" fill="#1830c0"></rect><rect x="6.5" y="7.8" width="4.5" height="3.8" fill="#fff" stroke="#4a5a9a" stroke-width="0.8"></rect><rect x="6.5" y="7.8" width="4.5" height="1.5" fill="#1830c0"></rect></svg>
<span class="t " style="left: 20px; top: 566px; font-size: 10.7px; transform: scaleX(1.0335);">Конфигурация *</span>
<div class="abs " style="left:149px;top:564px;width:144px;height:16px;background:#f8f7f4;border-top:1px solid #8a887f;border-left:1px solid #8a887f;border-right:1px solid #fff;border-bottom:1px solid #fff"></div>
<svg style="left:151px;top:565.5px" width="13" height="12"><path d="M0.8 5.2 L6.5 1 L12.2 2.8 L12.2 7 L6.8 11.6 L0.8 10.2Z" fill="#fff" stroke="#000" stroke-width="1.1"></path><path d="M3.2 4 L7 1.3 L11.6 2.9 L7.6 5.6Z" fill="#1414e6"></path><path d="M7.6 6.2 L12 3.4 L12 6.8 L7.6 10.8Z" fill="#1414e6"></path><path d="M9.2 4.6 L9.2 9.2 M10.6 3.9 L10.6 8" stroke="#f4f0c0" stroke-width="0.9"></path><path d="M1 5.4 L7.4 5.9 L7.4 11" stroke="#000" stroke-width="1" fill="none"></path><path d="M1.2 8.6 L7 9.6 L7 11 L1.2 9.9Z" fill="#1414e6"></path><path d="M2.8 7.8 V6.9 H3.8 V7.9 M4.8 8 V7.1 H5.8 V8.2" stroke="#000" stroke-width="0.7" fill="none"></path></svg>
<span class="t " style="left: 166px; top: 566px; font-size: 10.7px; font-weight: bold; transform: scaleX(1.0017);">Справочник Авторы</span>
<div class="abs " style="left:0px;top:581px;width:881px;height:1px;background:#d8d6ce"></div>
<span class="t " style="left: 2px; top: 584px; font-size: 9.6px; transform: scaleX(0.9823);">Для получения подсказки нажмите F1</span>
<div class="abs " style="left:702px;top:585px;width:22px;height:12px;border-top:1px solid #b0aea6;border-left:1px solid #b0aea6;border-right:1px solid #fff;border-bottom:1px solid #fff"></div>
<div class="abs " style="left:725px;top:585px;width:23px;height:12px;border-top:1px solid #b0aea6;border-left:1px solid #b0aea6;border-right:1px solid #fff;border-bottom:1px solid #fff"></div>
<div class="abs " style="left:750px;top:585px;width:130px;height:12px;border-top:1px solid #b0aea6;border-left:1px solid #b0aea6;border-right:1px solid #fff;border-bottom:1px solid #fff"></div>
<span class="t " style="left: 727px; top: 584px; font-size: 9.6px; transform: scaleX(0.8234);">NUM</span>
<span class="t " style="left: 753px; top: 584px; font-size: 9.6px; transform: scaleX(1.0066);">СТАТУС: БД , Документ *</span>
<div class="abs " style="left:0px;top:598px;width:881px;height:24px;background:linear-gradient(#2a58c8 0,#2a58c8 1px,#6ac0f8 1px,#68b8f6 2px,#5aa6f4 3.5px,#4a90ec 7px,#3a7ce4 11px,#3070dc 15px,#2a5ccc 19px,#2450c0 22px,#2048b8 24px)"></div>
<div class="abs " style="left:0px;top:598px;width:76px;height:24px;border-radius:0 9px 9px 0;background:linear-gradient(#2a862a 0,#5cc05c 10%,#3aa83a 26%,#2c9c2c 60%,#289428 86%,#1c701c 100%);box-shadow:1px 0 2px #1a3c8c"></div>
<svg style="left:9px;top:603px" width="12" height="12"><path d="M1 2 Q3 0.5 5.3 2 L4.6 6 Q2.6 4.8 0.5 6Z" fill="#e8502a"></path><path d="M6.3 2.3 Q8.5 3.6 11 2.3 L10.3 6.2 Q8 7.4 5.7 6.2Z" fill="#6cc04a"></path><path d="M0.4 7 Q2.5 5.8 4.5 7 L3.8 11 Q1.8 9.8 -0.2 11Z" fill="#4a8af0"></path><path d="M5.5 7.2 Q7.8 8.4 10.1 7.2 L9.4 11 Q7.2 12.2 4.9 11Z" fill="#f4c830"></path></svg>
<span class="t w" style="left: 22px; top: 603px; font-size: 13px; font-weight: bold; font-style: italic; text-shadow: rgb(26, 74, 26) 1px 1px 1px; transform: scaleX(1.0517);">пуск</span>
<div class="abs " style="left:85px;top:601px;width:134px;height:20px;background:rgba(255,255,255,.07);border:1px solid rgba(20,50,140,.35);border-top-color:rgba(255,255,255,.18);border-left-color:rgba(255,255,255,.14);border-radius:2px"></div>
<span class="t w" style="left: 108px; top: 603px; font-size: 9.6px; transform: scaleX(0.9972);"><b>3</b> Проводник</span>
<div class="abs " style="left:223px;top:601px;width:133px;height:20px;background:rgba(255,255,255,.07);border:1px solid rgba(20,50,140,.35);border-top-color:rgba(255,255,255,.18);border-left-color:rgba(255,255,255,.14);border-radius:2px"></div>
<span class="t w" style="left: 246px; top: 603px; font-size: 9.6px; transform: scaleX(0.9846);">ДИПЛОМ Кушекбае...</span>
<div class="abs " style="left:359px;top:601px;width:136px;height:20px;background:rgba(255,255,255,.07);border:1px solid rgba(20,50,140,.35);border-top-color:rgba(255,255,255,.18);border-left-color:rgba(255,255,255,.14);border-radius:2px"></div>
<span class="t w" style="left: 383.5px; top: 603px; font-size: 9.6px; transform: scaleX(0.9755);">Диплом.doc [Режим ...</span>
<div class="abs " style="left:499px;top:601px;width:132px;height:20px;background:rgba(255,255,255,.07);border:1px solid rgba(20,50,140,.35);border-top-color:rgba(255,255,255,.18);border-left-color:rgba(255,255,255,.14);border-radius:2px"></div>
<span class="t w" style="left: 520.7px; top: 603px; font-size: 9.6px; transform: scaleX(1.0429);">Total Commander 7.0...</span>
<div class="abs " style="left:634px;top:601px;width:136px;height:20px;background:linear-gradient(#1a3c9c 0,#2048b0 15%,#2450bc 60%,#2a58c4 100%);border:1px solid #163488;border-radius:2px"></div>
<span class="t w" style="left: 659px; top: 603px; font-size: 9.6px; transform: scaleX(1.0231);">Конфигуратор - Биб...</span>
<svg style="left:209px;top:609px" width="6" height="4"><path d="M0 0 L3 3 L6 0Z" fill="#cfe0ff"></path></svg>
<svg style="left:91px;top:603px" width="14" height="14"><rect x="3" y="1" width="10" height="8" fill="#1a2a9a" stroke="#c8d0e8" stroke-width="1"></rect><rect x="5" y="2.5" width="6" height="4.5" fill="#3a6aea"></rect><rect x="1" y="10" width="11" height="3" fill="#d8d4c4" stroke="#6a6a6a" stroke-width="0.6"></rect></svg>
<svg style="left:231px;top:603px" width="11" height="13"><rect x="0.5" y="0.5" width="10" height="12" fill="#fff" stroke="#8a9ab8" stroke-width="1"></rect><rect x="1.5" y="3" width="6.5" height="7" fill="#2a4ab0"></rect><path d="M2.5 4.5 L3.6 8.5 L4.8 5.5 L6 8.5 L7 4.5" stroke="#fff" stroke-width="0.9" fill="none"></path></svg>
<svg style="left:368px;top:603px" width="11" height="13"><rect x="0.5" y="0.5" width="10" height="12" fill="#fff" stroke="#8a9ab8" stroke-width="1"></rect><rect x="1.5" y="3" width="6.5" height="7" fill="#2a4ab0"></rect><path d="M2.5 4.5 L3.6 8.5 L4.8 5.5 L6 8.5 L7 4.5" stroke="#fff" stroke-width="0.9" fill="none"></path></svg>
<svg style="left:505px;top:603px" width="12" height="13"><rect x="0.5" y="0.5" width="11" height="12" fill="#2a3ab8" stroke="#101c70" stroke-width="1"></rect><rect x="2.5" y="1" width="7" height="4" fill="#e8e8f0"></rect><rect x="1.5" y="7" width="9" height="3" fill="#e83030"></rect><rect x="1.5" y="10" width="9" height="2" fill="#f0f0f0"></rect></svg>
<div class="abs " style="left:643px;top:604px;width:14px;height:12px;background:#f4e21a;border-radius:2px"></div>
<svg style="left:643px;top:604px" width="14" height="12"><path d="M1 8 L5 3 L8 7 L13 1" stroke="#d02020" stroke-width="2" fill="none"></path><path d="M2 3 L6 9 L12 6" stroke="#2838c0" stroke-width="1.6" fill="none"></path><rect x="9" y="8" width="4" height="4" fill="#203080"></rect></svg>
<div class="abs " style="left:801px;top:598px;width:80px;height:24px;background:linear-gradient(#3a70c8 0,#3a70c8 1px,#b8dcfc 1px,#a4ccfa 2.5px,#8cbaf6 5px,#78a8f2 9px,#6698ee 13px,#5488e8 17px,#4478e0 21px,#3466d0 24px)"></div>
<div class="abs " style="left:794px;top:603px;width:14px;height:14px;border-radius:50%;background:radial-gradient(circle at 40% 35%,#e8f4ff,#9cccf8 60%,#4a94e8);border:1px solid #d8ecfc"></div>
<svg style="left:798px;top:606.5px" width="6" height="7"><path d="M4.5 0.5 L1.5 3.5 L4.5 6.5" stroke="#1a3c9c" stroke-width="1.5" fill="none"></path></svg>
<svg style="left:810px;top:603px" width="15" height="14"><rect x="5" y="0.5" width="9" height="8" fill="#8a8a8a" stroke="#c8c8c8" stroke-width="0.8"></rect><rect x="0.5" y="4" width="9" height="8" fill="#6c6c6c" stroke="#bcbcbc" stroke-width="0.8"></rect><rect x="2" y="5.5" width="6" height="4.5" fill="#5a5e68"></rect></svg>
<svg style="left:826px;top:602px" width="15" height="15"><path d="M1 1 H9 L5 7 L11 14 H1Z" fill="#e02a20"></path><path d="M3 2.5 V12 M3 7 L8 2" stroke="#fff" stroke-width="1.6" fill="none"></path><path d="M10 6 L14.5 14 H5.5Z" fill="#f8d830" stroke="#a07800" stroke-width="0.6"></path><rect x="9.6" y="9" width="0.9" height="3" fill="#000"></rect></svg>
<span class="t " style="left: 846px; top: 603px; font-size: 9.6px; transform: scaleX(0.9577);">10:34</span>
</div></body></html>
